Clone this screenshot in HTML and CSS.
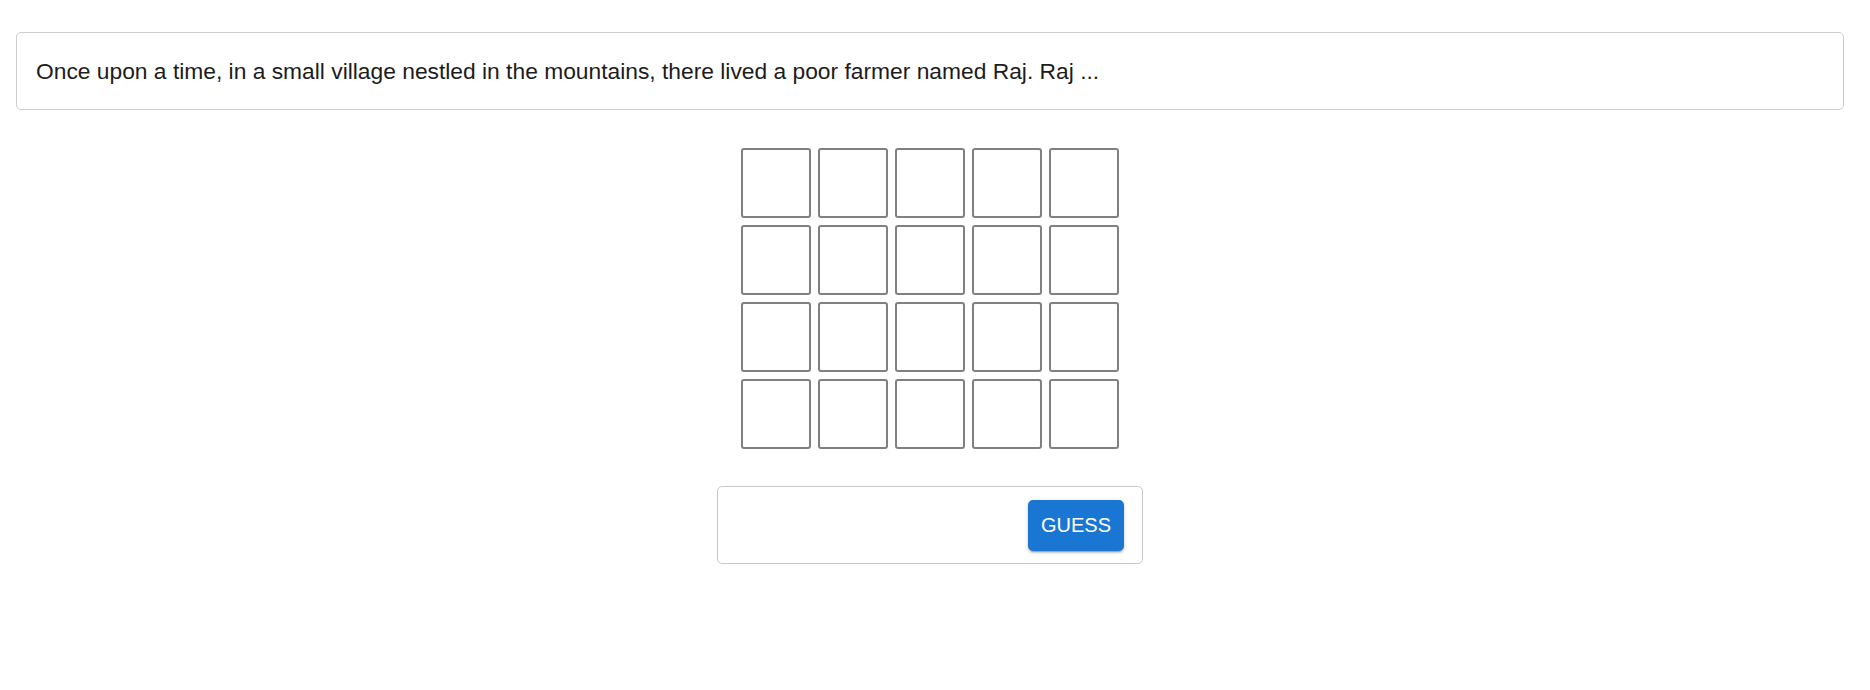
FILE: index.html
```html
<!DOCTYPE html>
<html>
<head>
<meta charset="utf-8">
<link rel="stylesheet" href="styles.css">
</head>
<body>
<div class="page">
  <div class="story">Once upon a time, in a small village nestled in the mountains, there lived a poor farmer named Raj. Raj ...</div>
  <div class="board">
    <div class="cell"></div><div class="cell"></div><div class="cell"></div><div class="cell"></div><div class="cell"></div>
    <div class="cell"></div><div class="cell"></div><div class="cell"></div><div class="cell"></div><div class="cell"></div>
    <div class="cell"></div><div class="cell"></div><div class="cell"></div><div class="cell"></div><div class="cell"></div>
    <div class="cell"></div><div class="cell"></div><div class="cell"></div><div class="cell"></div><div class="cell"></div>
  </div>
  <div class="guess-box">
    <input class="guess-input" type="text">
    <button class="guess-btn">GUESS</button>
  </div>
</div>
</body>
</html>
```

FILE: styles.css
```css
html, body {
  margin: 0;
  padding: 0;
  background: #ffffff;
}
body {
  font-family: "Liberation Sans", Arial, sans-serif;
  color: #212121;
}
.page {
  width: 1828px;
  margin: 32px 0 0 16px;
  display: flex;
  flex-direction: column;
  align-items: center;
}
.story {
  box-sizing: border-box;
  width: 100%;
  border: 1px solid #cccccc;
  border-radius: 5px;
  padding: 21px 19px;
  font-size: 22.8px;
  line-height: 34px;
  color: #1c1c1c;
}
.board {
  margin-top: 38px;
  display: grid;
  grid-template-columns: repeat(5, 70px);
  grid-auto-rows: 70px;
  gap: 7px;
}
.cell {
  box-sizing: border-box;
  border: 2px solid #808080;
  border-radius: 3px;
}
.guess-box {
  box-sizing: border-box;
  margin-top: 37px;
  width: 426px;
  height: 78px;
  border: 1px solid #c8c8c8;
  border-radius: 5px;
  display: flex;
  align-items: center;
  padding: 0 18px 0 14px;
  gap: 12px;
}
.guess-input {
  flex: 1;
  min-width: 0;
  border: none;
  outline: none;
  background: transparent;
  font-family: inherit;
  font-size: 20px;
}
.guess-btn {
  box-sizing: border-box;
  width: 96px;
  height: 51px;
  margin-top: 1px;
  border: none;
  border-radius: 5px;
  background: #1976d2;
  color: #ffffff;
  font-family: "Liberation Sans", Arial, sans-serif;
  font-size: 20px;
  padding: 0;
  box-shadow: 0 3px 1px -2px rgba(0,0,0,0.2), 0 2px 2px 0 rgba(0,0,0,0.14), 0 1px 5px 0 rgba(0,0,0,0.12);
}
```
